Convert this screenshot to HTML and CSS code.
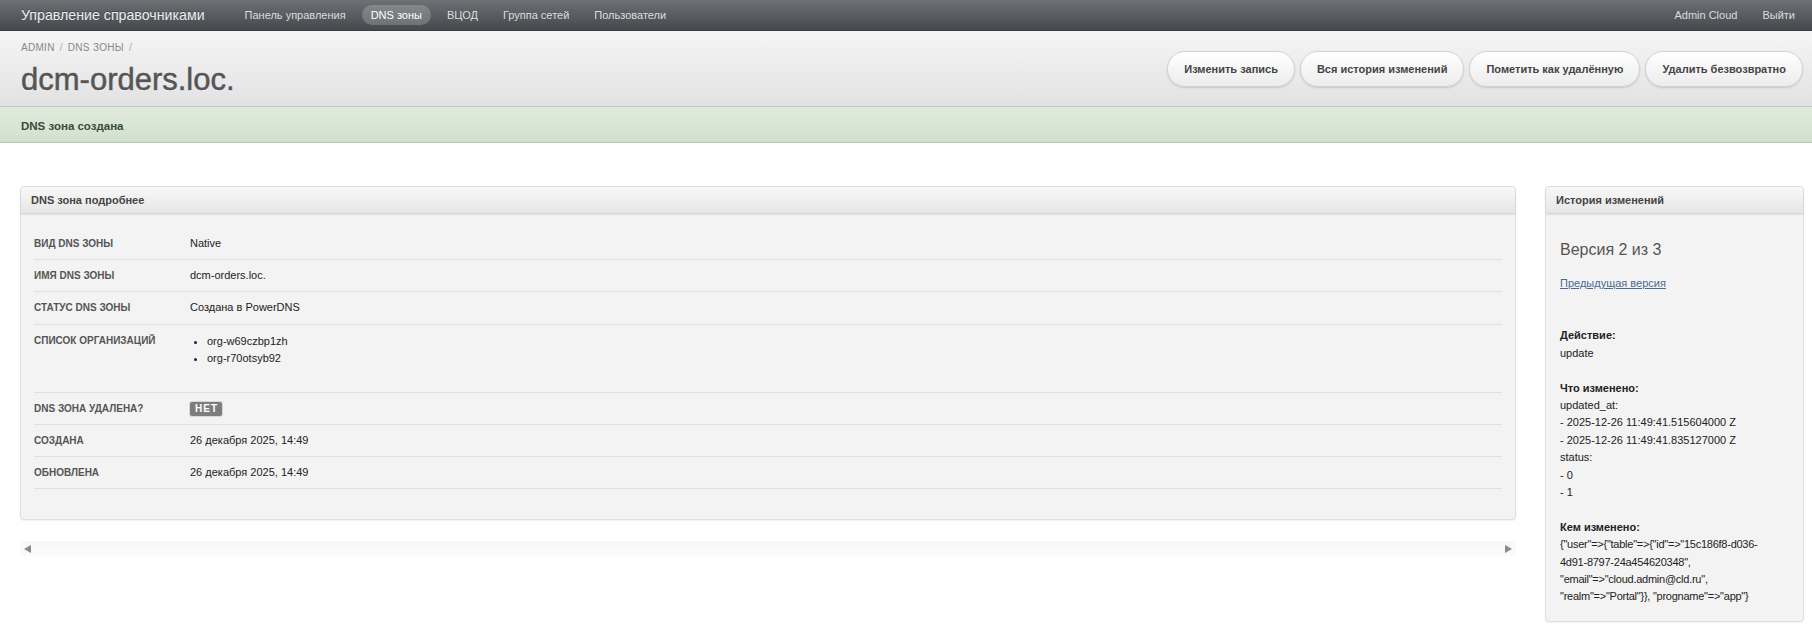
FILE: index.html
```html
<!DOCTYPE html>
<html lang="ru">
<head>
  <meta charset="UTF-8" />
  <meta name="viewport" content="width=device-width, initial-scale=1.0"/>
  <title>dcm-orders.loc. — DNS зоны</title>
  <link rel="stylesheet" href="styles.css">
</head>
<body>

<nav class="topbar">
  <a class="brand" href="#">Управление справочниками</a>
  <ul class="nav">
    <li><a href="#">Панель управления</a></li>
    <li><a href="#" class="active">DNS зоны</a></li>
    <li><a href="#">ВЦОД</a></li>
    <li><a href="#">Группа сетей</a></li>
    <li><a href="#">Пользователи</a></li>
  </ul>
  <ul class="nav nav-right">
    <li><a href="#">Admin Cloud</a></li>
    <li><a href="#">Выйти</a></li>
  </ul>
</nav>

<header class="page-header">
  <div class="page-title">
    <ol class="crumbs">
      <li><a href="#">Admin</a></li>
      <li><a href="#">DNS зоны</a></li>
    </ol>
    <h1>dcm-orders.loc.</h1>
  </div>
  <div class="actions">
    <button class="btn">Изменить запись</button>
    <button class="btn">Вся история изменений</button>
    <button class="btn">Пометить как удалённую</button>
    <button class="btn">Удалить безвозвратно</button>
  </div>
</header>

<div class="flash">DNS зона создана</div>

<main class="content">
  <section class="main-col">
    <div class="panel">
      <div class="panel-heading">DNS зона подробнее</div>
      <div class="panel-body">
        <table class="details">
          <tr>
            <th>Вид DNS зоны</th>
            <td>Native</td>
          </tr>
          <tr>
            <th>Имя DNS зоны</th>
            <td>dcm-orders.loc.</td>
          </tr>
          <tr>
            <th>Статус DNS зоны</th>
            <td>Создана в PowerDNS</td>
          </tr>
          <tr>
            <th>Список организаций</th>
            <td>
              <ul class="orgs">
                <li>org-w69czbp1zh</li>
                <li>org-r70otsyb92</li>
              </ul>
            </td>
          </tr>
          <tr>
            <th>DNS зона удалена?</th>
            <td><span class="badge">Нет</span></td>
          </tr>
          <tr>
            <th>Создана</th>
            <td>26 декабря 2025, 14:49</td>
          </tr>
          <tr>
            <th>Обновлена</th>
            <td>26 декабря 2025, 14:49</td>
          </tr>
        </table>
      </div>
    </div>
    <div class="hscroll">
      <span class="arrow arrow-left"></span>
      <span class="arrow arrow-right"></span>
    </div>
  </section>

  <aside class="panel history">
    <div class="panel-heading">История изменений</div>
    <div class="panel-body">
      <h3>Версия 2 из 3</h3>
      <p class="prev"><a href="#">Предыдущая версия</a></p>
      <div class="changes">
        <p><b>Действие:</b><br>update</p>
        <p><b>Что изменено:</b><br>updated_at:<br>- 2025-12-26 11:49:41.515604000 Z<br>- 2025-12-26 11:49:41.835127000 Z<br>status:<br>- 0<br>- 1</p>
        <p><b>Кем изменено:</b><br><span class="raw">{"user"=>{"table"=>{"id"=>"15c186f8-d036-<br>4d91-8797-24a454620348",<br>"email"=>"cloud.admin@cld.ru",<br>"realm"=>"Portal"}}, "progname"=>"app"}</span></p>
      </div>
    </div>
  </aside>
</main>

</body>
</html>
```

FILE: styles.css
```css
* {
  box-sizing: border-box;
}
body {
  margin: 0;
  font-family: 'Liberation Sans', Arial, sans-serif;
  font-size: 11px;
  color: #222;
  background: #fff;
}

/* top bar */
.topbar {
  display: flex;
  align-items: center;
  height: 31px;
  padding: 0 8px 0 21px;
  background: linear-gradient(#6d7175, #45494d);
  border-bottom: 1px solid #3b3e41;
}
.brand {
  font-size: 14.2px;
  color: #eee;
  text-decoration: none;
  margin-right: 31px;
  text-shadow: 0 -1px 0 rgba(0,0,0,0.3);
}
.nav {
  display: flex;
  gap: 7px;
  list-style: none;
  margin: 0;
  padding: 0;
}
.nav a {
  display: block;
  padding: 0 9px;
  line-height: 20px;
  border-radius: 10px;
  color: #ddd;
  text-decoration: none;
}
.nav a.active {
  background: rgba(255,255,255,0.2);
  color: #fff;
}
.nav-right {
  margin-left: auto;
}

/* page header */
.page-header {
  display: flex;
  justify-content: space-between;
  align-items: center;
  padding: 10px 9px 9px 21px;
  background: linear-gradient(#f5f5f5, #e2e2e4);
  border-bottom: 1px solid #c4c4c4;
}
.crumbs {
  display: flex;
  list-style: none;
  margin: 0;
  padding: 0;
  font-size: 10px;
  line-height: 14px;
  letter-spacing: 0.3px;
  text-transform: uppercase;
}
.crumbs a {
  color: #888;
  text-decoration: none;
}
.crumbs li::after {
  content: "/";
  padding: 0 5px;
  color: #aaa;
}
h1 {
  margin: 7px 0 0;
  font-size: 31px;
  line-height: 35px;
  font-weight: normal;
  color: #555;
  -webkit-text-stroke: 0.5px #555;
  text-shadow: 0 1px 0 #fff;
}
.actions {
  display: flex;
  gap: 5px;
  margin-top: -1px;
}
.btn {
  height: 36px;
  padding: 0 16px;
  border: 1px solid #d2d2d2;
  border-radius: 18px;
  background: linear-gradient(#fff, #ececec);
  box-shadow: 0 1px 2px rgba(0,0,0,0.15);
  font-family: inherit;
  font-size: 11px;
  font-weight: bold;
  color: #444;
  cursor: pointer;
}

/* flash */
.flash {
  height: 36px;
  line-height: 35px;
  padding: 2px 21px 0;
  background: linear-gradient(#e0eadc, #d1e1cc);
  border-bottom: 1px solid #b7caaf;
  font-size: 11.5px;
  font-weight: bold;
  color: #3b4a39;
}

/* content */
.content {
  display: grid;
  grid-template-columns: 1fr 259px;
  gap: 29px;
  align-items: start;
  padding: 43px 8px 20px 20px;
}
.panel {
  background: #f3f3f3;
  border: 1px solid #dedede;
  border-radius: 4px;
  box-shadow: 0 1px 2px rgba(0,0,0,0.06);
}
.panel-heading {
  height: 27px;
  line-height: 26px;
  padding: 0 10px;
  background: linear-gradient(#f8f8f8, #e6e6e6);
  border-bottom: 1px solid #d4d4d4;
  border-radius: 4px 4px 0 0;
  box-shadow: 0 1px 2px rgba(0,0,0,0.08);
  font-weight: bold;
  color: #444;
}
.main-col .panel-body {
  padding: 14px 13px 30px 13px;
}
.details {
  width: 100%;
  border-collapse: collapse;
}
.details th,
.details td {
  padding: 8px 0;
  line-height: 15.2px;
  text-align: left;
  vertical-align: top;
  border-bottom: 1px solid #e1e1e1;
}
.details th {
  width: 156px;
  font-size: 10px;
  font-weight: bold;
  text-transform: uppercase;
  color: #555;
}
.orgs {
  margin: 0 0 17px;
  padding-left: 17px;
}
.orgs li {
  line-height: 17px;
}
.badge {
  display: inline-block;
  padding: 0 4px 0 5px;
  line-height: 14px;
  background: #7d7d7d;
  border-radius: 2px;
  box-shadow: 0 0 0 1px #d6d6d6;
  color: #fff;
  font-size: 10px;
  font-weight: bold;
  letter-spacing: 1px;
  text-transform: uppercase;
}
.hscroll {
  display: flex;
  justify-content: space-between;
  align-items: center;
  height: 15px;
  margin-top: 21px;
  padding: 0 4px;
  background: linear-gradient(#f7f7f7, #fbfbfb);
}
.arrow {
  width: 0;
  height: 0;
  border-top: 4px solid transparent;
  border-bottom: 4px solid transparent;
}
.arrow-left {
  border-right: 7px solid #8a8a8a;
}
.arrow-right {
  border-left: 7px solid #8a8a8a;
}

/* history */
.history .panel-body {
  padding: 16px 14px 15px;
  line-height: 17.4px;
}
.history h3 {
  margin: 9px 0 0;
  font-size: 16px;
  line-height: 22px;
  font-weight: normal;
  color: #555;
}
.prev {
  margin: 14px 0 0;
}
.prev a {
  color: #486a92;
}
.changes {
  margin-top: 35px;
}
.changes p {
  margin: 0 0 17.4px;
}
.changes p:last-child {
  margin-bottom: 0;
}
.raw {
  letter-spacing: -0.25px;
}
```
